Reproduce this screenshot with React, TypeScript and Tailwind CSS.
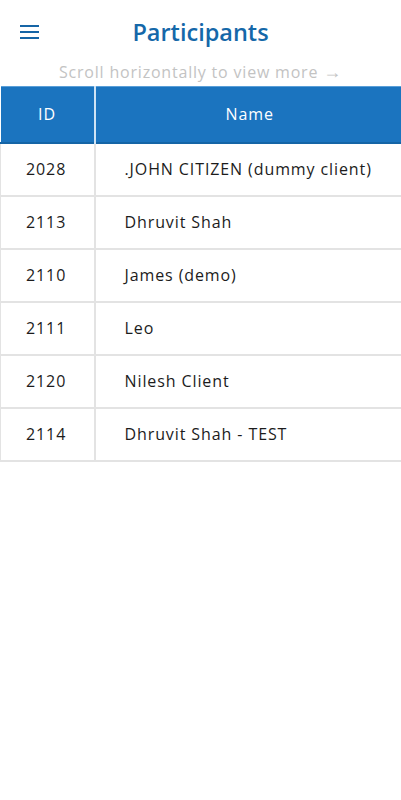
import React from 'react'

const rows = [
  { id: '2028', name: '.JOHN CITIZEN (dummy client)' },
  { id: '2113', name: 'Dhruvit Shah' },
  { id: '2110', name: 'James (demo)' },
  { id: '2111', name: 'Leo' },
  { id: '2120', name: 'Nilesh Client' },
  { id: '2114', name: 'Dhruvit Shah - TEST' },
]

export default function App() {
  return (
    <div className="min-h-screen bg-white font-['Open_Sans',sans-serif]">
      {/* Top bar */}
      <header className="relative flex items-center justify-center h-[62px]">
        <button className="absolute left-[20px] top-[25px] flex flex-col gap-[4px]">
          <span className="block w-[19px] h-[2px] bg-[#1665a6]" />
          <span className="block w-[19px] h-[2px] bg-[#1665a6]" />
          <span className="block w-[19px] h-[2px] bg-[#1665a6]" />
        </button>
        <h1 className="text-[23.5px] font-semibold text-[#1568a9] pt-[4px]">Participants</h1>
      </header>

      <p className="text-center text-[16px] text-[#c3c3c3] leading-[18px] tracking-[0.8px] mb-[5px]">
        Scroll horizontally to view more <span className="text-[18px]">→</span>
      </p>

      {/* Table */}
      <div className="overflow-hidden">
        <table className="w-[404px] border-collapse text-[16px] tracking-[0.9px]">
          <thead>
            <tr className="bg-[#1b74bf] text-white h-[56px] border-t border-t-[#5a9fd8] border-b-2 border-b-[#1565a6]">
              <th className="w-[94px] font-medium text-center border-r-2 border-r-[#cfe3f4]">ID</th>
              <th className="font-medium text-center">Name</th>
            </tr>
          </thead>
          <tbody>
            {rows.map(r => (
              <tr key={r.id} className="h-[53px] border-b-2 border-[#e3e3e3] text-[#1c1c1c]">
                <td className="pl-[25px] border-l border-r-2 border-[#e3e3e3]">{r.id}</td>
                <td className="pl-[29px]">{r.name}</td>
              </tr>
            ))}
          </tbody>
        </table>
      </div>
    </div>
  )
}
